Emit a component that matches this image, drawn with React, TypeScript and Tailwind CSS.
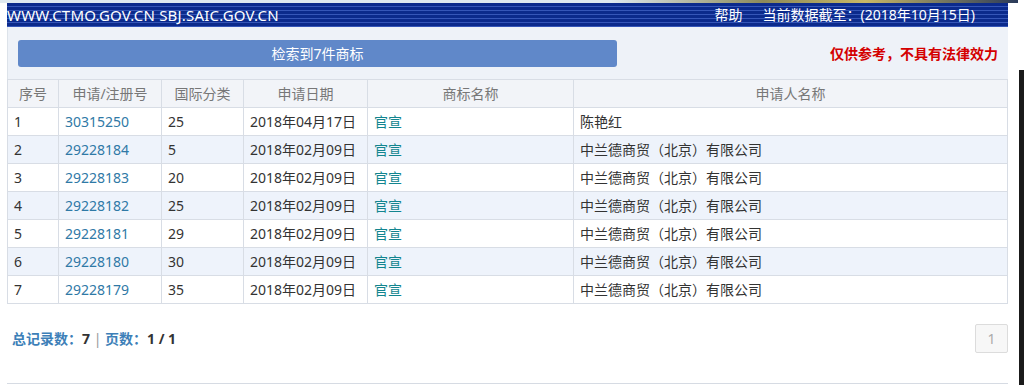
const rows = [
  { no: '1', reg: '30315250', cls: '25', date: '2018年04月17日', name: '官宣', owner: '陈艳红' },
  { no: '2', reg: '29228184', cls: '5', date: '2018年02月09日', name: '官宣', owner: '中兰德商贸（北京）有限公司' },
  { no: '3', reg: '29228183', cls: '20', date: '2018年02月09日', name: '官宣', owner: '中兰德商贸（北京）有限公司' },
  { no: '4', reg: '29228182', cls: '25', date: '2018年02月09日', name: '官宣', owner: '中兰德商贸（北京）有限公司' },
  { no: '5', reg: '29228181', cls: '29', date: '2018年02月09日', name: '官宣', owner: '中兰德商贸（北京）有限公司' },
  { no: '6', reg: '29228180', cls: '30', date: '2018年02月09日', name: '官宣', owner: '中兰德商贸（北京）有限公司' },
  { no: '7', reg: '29228179', cls: '35', date: '2018年02月09日', name: '官宣', owner: '中兰德商贸（北京）有限公司' },
];

const heads = ['序号', '申请/注册号', '国际分类', '申请日期', '商标名称', '申请人名称'];
const widths = ['w-[51px]', 'w-[103px]', 'w-[82px]', 'w-[124px]', 'w-[206px]', ''];

export default function App() {
  return (
    <div className="w-[1024px] h-[385px] overflow-hidden bg-white text-[14px] text-[#333] font-['Noto_Sans','Noto_Sans_CJK_SC',sans-serif] flex">
      <div className="w-[1018px] flex flex-col">
        {/* top strip */}
        <div className="h-[3px] bg-[linear-gradient(to_right,#dfe9f0_0%,#dfe9f0_60%,#8c8a5a_75%,#c9b866_85%,#2a3a5a_100%)]" />

        {/* banner */}
        <div className="ml-[7px] mr-[10px] h-[24px] flex items-center justify-between text-white text-[14px] leading-none bg-[repeating-linear-gradient(to_bottom,#0b2a8c_0px,#0b2a8c_3px,#3556b8_3px,#3556b8_4px)]">
          <span className="text-[15px] tracking-[0.2px]">WWW.CTMO.GOV.CN SBJ.SAIC.GOV.CN</span>
          <div className="flex gap-[20px] pr-[33px]">
            <span>帮助</span>
            <span>当前数据截至：(2018年10月15日)</span>
          </div>
        </div>

        {/* search bar panel */}
        <div className="ml-[7px] mr-[10px] h-[52px] bg-[#eef2f8] border-l border-[#dde3ea] flex items-center pl-[10px] pr-[10px]">
          <div className="w-[599px] h-[27px] rounded-[3px] bg-[#6088c9] text-white flex items-center justify-center text-[14px]">
            检索到7件商标
          </div>
          <div className="ml-auto text-[#d40000] font-bold text-[14px]">仅供参考，不具有法律效力</div>
        </div>

        {/* table */}
        <table className="ml-[7px] w-[1001px] border-collapse table-fixed">
          <thead>
            <tr className="h-[28px] bg-[#f2f4f8]">
              {heads.map((h, i) => (
                <th key={h} className={`${widths[i]} border border-[#d8dde5] font-normal text-[#777] text-center`}>
                  {h}
                </th>
              ))}
            </tr>
          </thead>
          <tbody>
            {rows.map((r, i) => (
              <tr key={r.reg} className={`h-[28px] ${i % 2 === 1 ? 'bg-[#eef3fb]' : 'bg-white'}`}>
                <td className="border border-[#d8dde5] pl-[6px]">{r.no}</td>
                <td className="border border-[#d8dde5] pl-[6px] text-[#2f79a6]">{r.reg}</td>
                <td className="border border-[#d8dde5] pl-[6px]">{r.cls}</td>
                <td className="border border-[#d8dde5] pl-[6px]">{r.date}</td>
                <td className="border border-[#d8dde5] pl-[6px] text-[#12858f]">{r.name}</td>
                <td className="border border-[#d8dde5] pl-[6px]">{r.owner}</td>
              </tr>
            ))}
          </tbody>
        </table>

        {/* footer */}
        <div className="ml-[7px] w-[1001px] flex items-center justify-between mt-[20px] pl-[5px]">
          <div className="text-[#3d7fb8] text-[14px] font-bold">
            总记录数：<span className="text-[#333]">7</span>
            <span className="text-[#999] font-normal"> | </span>
            页数：<span className="text-[#333]">1 / 1</span>
          </div>
          <div className="w-[33px] h-[29px] border border-[#dcdcdc] rounded-[2px] bg-[#f7f7f7] text-[#aaa] flex items-center justify-center text-[14px]">
            1
          </div>
        </div>

        <div className="ml-[7px] w-[1001px] mt-auto mb-[1px] border-t border-[#d6dbe3]" />
      </div>
      <div className="flex-1 flex flex-col">
        <div className="h-[70px] bg-white" />
        <div className="flex-1 ml-[1px] bg-[#1a1a1a]" />
      </div>
    </div>
  );
}
